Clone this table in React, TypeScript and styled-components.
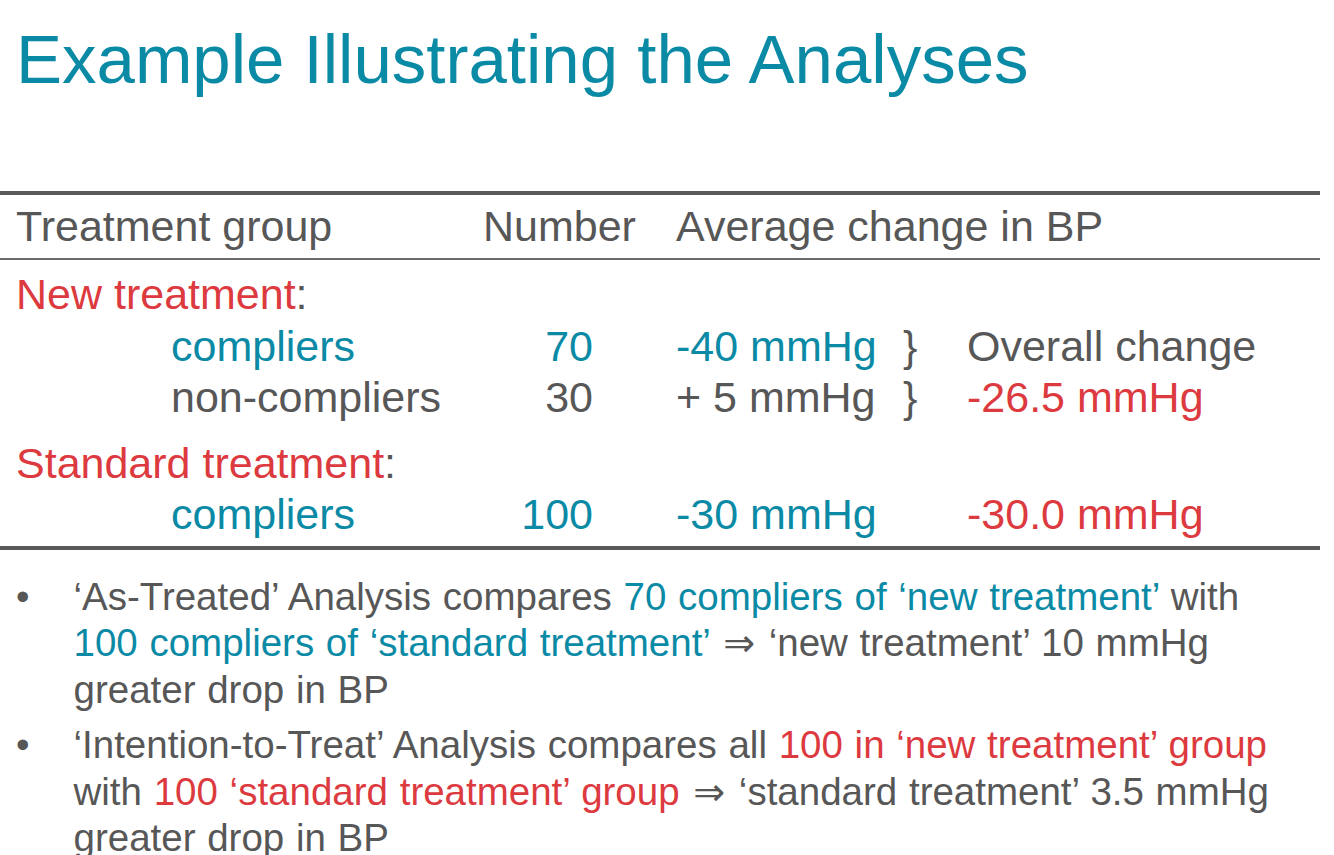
import styled, { createGlobalStyle } from "styled-components";

const TEAL = "#0b8aa6";
const RED = "#dc3a3f";
const GREY = "#575757";

type Tone = "grey" | "teal" | "red";

const toneColor = (tone?: Tone) => (tone === "teal" ? TEAL : tone === "red" ? RED : GREY);

const GlobalStyle = createGlobalStyle`
  html, body {
    margin: 0;
    padding: 0;
    background: #ffffff;
  }

  body {
    font-family: "Liberation Sans", Arial, "DejaVu Sans", sans-serif;
    color: ${GREY};
  }
`;

const Slide = styled.div`
  width: 1334px;
  height: 855px;
  overflow: hidden;
  display: flex;
  flex-direction: column;
`;

const Title = styled.h1`
  margin: 0;
  padding: 25px 0 0 16px;
  font-size: 69px;
  line-height: 69px;
  font-weight: 400;
  color: ${TEAL};
  white-space: nowrap;
`;

const Table = styled.div`
  margin-top: 97px;
  width: 1320px;
  border-top: 4px solid #595959;
  border-bottom: 4px solid #595959;
  font-size: 43px;
`;

const HeaderRow = styled.div`
  display: grid;
  grid-template-columns: 483px 193px 227px 64px 1fr;
  padding: 6px 0;
  line-height: 51px;
  border-bottom: 2px solid #6a6a6a;
  white-space: nowrap;
`;

const Body = styled.div`
  padding: 9px 0 5.5px;
`;

const Row = styled.div<{ $gap?: number }>`
  display: grid;
  grid-template-columns: 483px 193px 227px 64px 1fr;
  line-height: 51.5px;
  margin-top: ${(p) => p.$gap ?? 0}px;
  white-space: nowrap;
`;

const Cell = styled.div<{ $tone?: Tone; $span?: string; $indent?: boolean }>`
  color: ${(p) => toneColor(p.$tone)};
  ${(p) => (p.$span ? `grid-column: ${p.$span};` : "")}
`;

const FirstCell = styled(Cell)`
  padding-left: ${(p) => (p.$indent ? 171 : 16)}px;
`;

const Num = styled.div<{ $tone?: Tone }>`
  color: ${(p) => toneColor(p.$tone)};
  text-align: right;
  padding-right: 83px;
`;

const Brace = styled.div`
  color: ${GREY};
`;

const Tint = styled.span<{ $tone: Tone }>`
  color: ${(p) => toneColor(p.$tone)};
`;

const Bullets = styled.ul`
  list-style: none;
  margin: 24.2px 0 0;
  padding: 0;
  font-size: 38.5px;
  line-height: 46.3px;
  word-spacing: 1px;
`;

const Bullet = styled.li`
  display: grid;
  grid-template-columns: 57.5px 1fr;
  padding-left: 16px;
  white-space: nowrap;

  & + & {
    margin-top: 9.4px;
  }
`;

const Dot = styled.span`
  color: ${GREY};
`;

const Arrow = styled.span`
  font-family: "DejaVu Sans", sans-serif;
  font-size: 38px;
  margin: 0 2px;
`;

export default function App() {
  return (
    <>
      <GlobalStyle />
      <Slide>
        <Title>Example Illustrating the Analyses</Title>

        <Table>
          <HeaderRow>
            <FirstCell>Treatment group</FirstCell>
            <Cell>Number</Cell>
            <Cell $span="3 / -1">Average change in BP</Cell>
          </HeaderRow>

          <Body>
            <Row>
              <FirstCell $span="1 / -1">
                <Tint $tone="red">New treatment</Tint>:
              </FirstCell>
            </Row>
            <Row>
              <FirstCell $indent $tone="teal">
                compliers
              </FirstCell>
              <Num $tone="teal">70</Num>
              <Cell $tone="teal">-40 mmHg</Cell>
              <Brace>{"}"}</Brace>
              <Cell>Overall change</Cell>
            </Row>
            <Row>
              <FirstCell $indent>non-compliers</FirstCell>
              <Num>30</Num>
              <Cell>+ 5 mmHg</Cell>
              <Brace>{"}"}</Brace>
              <Cell $tone="red">-26.5 mmHg</Cell>
            </Row>
            <Row $gap={14}>
              <FirstCell $span="1 / -1">
                <Tint $tone="red">Standard treatment</Tint>:
              </FirstCell>
            </Row>
            <Row>
              <FirstCell $indent $tone="teal">
                compliers
              </FirstCell>
              <Num $tone="teal">100</Num>
              <Cell $tone="teal">-30 mmHg</Cell>
              <Brace />
              <Cell $tone="red">-30.0 mmHg</Cell>
            </Row>
          </Body>
        </Table>

        <Bullets>
          <Bullet>
            <Dot>•</Dot>
            <span>
              ‘As-Treated’ Analysis compares <Tint $tone="teal">70 compliers of ‘new treatment’</Tint> with
              <br />
              <Tint $tone="teal">100 compliers of ‘standard treatment’</Tint> <Arrow>⇒</Arrow> ‘new treatment’ 10 mmHg
              <br />
              greater drop in BP
            </span>
          </Bullet>
          <Bullet>
            <Dot>•</Dot>
            <span>
              ‘Intention-to-Treat’ Analysis compares all <Tint $tone="red">100 in ‘new treatment’ group</Tint>
              <br />
              with <Tint $tone="red">100 ‘standard treatment’ group</Tint> <Arrow>⇒</Arrow> ‘standard treatment’ 3.5 mmHg
              <br />
              greater drop in BP
            </span>
          </Bullet>
        </Bullets>
      </Slide>
    </>
  );
}
